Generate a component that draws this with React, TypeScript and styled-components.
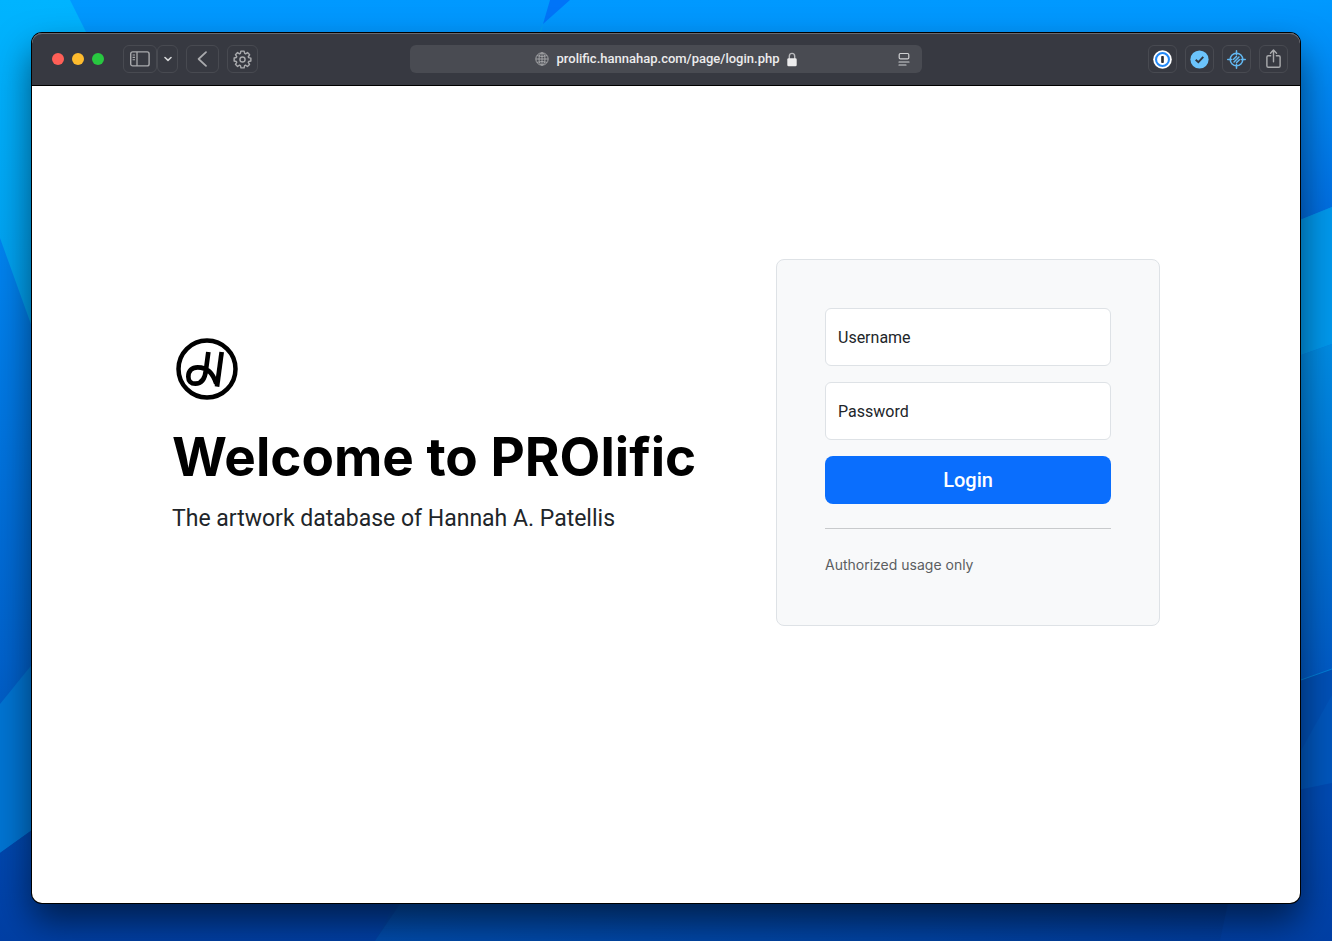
import React from "react";
import styled, { createGlobalStyle } from "styled-components";

const GlobalStyle = createGlobalStyle`
  *, *::before, *::after { box-sizing: border-box; }
  html, body, #root { margin: 0; min-height: 100%; }
  body {
    font-family: Roboto, "Liberation Sans", sans-serif;
    color: #212529;
    background: #0060d0;
  }
  button { font-family: inherit; cursor: pointer; }
`;

const Desktop = styled.div`
  position: relative;
  display: flex;
  min-height: 100vh;
  padding: 33px 32px 38px;
  overflow: hidden;
`;

const Wallpaper = styled.svg`
  position: absolute;
  inset: 0;
  width: 100%;
  height: 100%;
`;

const BrowserWindow = styled.div`
  position: relative;
  flex: 1;
  min-width: 0;
  display: flex;
  flex-direction: column;
  border-radius: 10px;
  background: #fff;
  box-shadow: 0 0 0 1px #000, 0 18px 36px rgba(0, 0, 0, 0.55);
`;

const Toolbar = styled.header`
  display: grid;
  grid-template-columns: 1fr minmax(0, 512px) 1fr;
  align-items: center;
  gap: 12px;
  height: 53px;
  padding: 0 12px;
  border-bottom: 1px solid #000;
  border-radius: 10px 10px 0 0;
  background: #373941;
  box-shadow: inset 0 1px 0 #686a70;
`;

const ToolGroup = styled.div<{ $end?: boolean }>`
  display: flex;
  align-items: center;
  gap: 8px;
  justify-content: ${(p) => (p.$end ? "flex-end" : "flex-start")};
`;

const TrafficLights = styled.div`
  display: flex;
  gap: 8px;
  margin: 0 11px 0 8px;
`;

const Light = styled.button<{ $color: string }>`
  width: 12px;
  height: 12px;
  padding: 0;
  border: 0;
  border-radius: 50%;
  background: ${(p) => p.$color};
`;

const ButtonPair = styled.div`
  display: flex;
`;

const ToolButton = styled.button<{ $width?: number }>`
  display: flex;
  align-items: center;
  justify-content: center;
  width: ${(p) => p.$width ?? 29}px;
  height: 28px;
  padding: 0;
  border: 1px solid #484a51;
  border-radius: 6px;
  background: transparent;
  color: #a9aaad;
`;

const AddressBar = styled.div`
  display: grid;
  grid-template-columns: 1fr auto 1fr;
  align-items: center;
  height: 28px;
  padding: 0 12px;
  border-radius: 6px;
  background: #494b52;
  color: #ececed;
`;

const Address = styled.div`
  grid-column: 2;
  display: flex;
  align-items: center;
  gap: 8px;
  font-size: 13px;
  line-height: 16px;
  font-weight: 500;
  white-space: nowrap;
`;

const ReaderButton = styled.button`
  justify-self: end;
  display: flex;
  padding: 0;
  border: 0;
  background: transparent;
  color: #d0d1d3;
`;

const Page = styled.main`
  flex: 1;
  display: flex;
  justify-content: center;
  align-items: flex-start;
  padding: 173px 24px 48px;
`;

const Container = styled.div`
  display: flex;
  flex-wrap: wrap;
  align-items: center;
  justify-content: space-between;
  gap: 32px;
  width: 100%;
  max-width: 988px;
`;

const Intro = styled.section`
  padding-bottom: 12px;
`;

const Logo = styled.svg`
  display: block;
  margin: 0 3px 28px;
`;

const Title = styled.h1`
  margin: 0 0 16px;
  font-family: Inter, "Liberation Sans", sans-serif;
  font-size: 53px;
  line-height: 56px;
  font-weight: 700;
  color: #000;
`;

const Subtitle = styled.p`
  margin: 0;
  font-size: 23px;
  line-height: 36px;
`;

const Card = styled.form`
  width: 384px;
  padding: 48px;
  border: 1px solid #dee2e6;
  border-radius: 8px;
  background: #f8f9fa;
`;

const Field = styled.div`
  position: relative;
  margin-bottom: 16px;
`;

const Input = styled.input`
  display: block;
  width: 100%;
  height: 58px;
  padding: 24px 12px 8px;
  border: 1px solid #dee2e6;
  border-radius: 6px;
  background: #fff;
  font: inherit;
  color: inherit;
`;

const Label = styled.label`
  position: absolute;
  inset: 0;
  padding: 18px 13px 16px;
  font-size: 16px;
  line-height: 24px;
  pointer-events: none;

  ${Input}:focus + &, ${Input}:not(:placeholder-shown) + & {
    padding-top: 4px;
    font-size: 14px;
  }
`;

const LoginButton = styled.button`
  display: block;
  width: 100%;
  height: 48px;
  border: 0;
  border-radius: 8px;
  background: #0a6efd;
  color: #fff;
  font-size: 20px;
  line-height: 28px;
  font-weight: 500;
`;

const Divider = styled.hr`
  margin: 24px 0;
  border: 0;
  border-top: 1px solid #c8cacc;
`;

const Note = styled.small`
  display: block;
  font-family: Inter, "Liberation Sans", sans-serif;
  font-size: 14px;
  line-height: 24px;
  color: #5b5e61;
`;

const WallpaperArt = () => (
  <Wallpaper viewBox="0 0 1332 941" preserveAspectRatio="none" aria-hidden="true">
    <defs>
      <linearGradient id="base" x1="0" y1="0" x2="0" y2="1">
        <stop offset="0" stopColor="#0099ff" />
        <stop offset="0.25" stopColor="#0084f0" />
        <stop offset="0.7" stopColor="#0062cc" />
        <stop offset="1" stopColor="#0040a0" />
      </linearGradient>
      <linearGradient id="cyan" x1="0" y1="0" x2="0" y2="1">
        <stop offset="0" stopColor="#00b4ff" />
        <stop offset="1" stopColor="#0098e8" />
      </linearGradient>
      <linearGradient id="right" gradientUnits="userSpaceOnUse" x1="0" y1="0" x2="0" y2="240">
        <stop offset="0" stopColor="#0099ff" />
        <stop offset="1" stopColor="#0068dc" />
      </linearGradient>
      <linearGradient id="facet" x1="0" y1="0" x2="0" y2="1">
        <stop offset="0" stopColor="#008ce4" />
        <stop offset="1" stopColor="#0056c2" />
      </linearGradient>
      <linearGradient id="floor" gradientUnits="userSpaceOnUse" x1="0" y1="800" x2="0" y2="941">
        <stop offset="0" stopColor="#004ab2" />
        <stop offset="1" stopColor="#003fa4" />
      </linearGradient>
      <linearGradient id="floorLight" gradientUnits="userSpaceOnUse" x1="375" y1="0" x2="1250" y2="0">
        <stop offset="0" stopColor="#004cac" />
        <stop offset="1" stopColor="#003c9c" />
      </linearGradient>
    </defs>
    <rect width="1332" height="941" fill="url(#base)" />
    <path d="M0 0H70L90 40V400L32 327L0 238Z" fill="url(#cyan)" />
    <path d="M550 0H570L543 24Z" fill="#0074f8" />
    <path d="M543 24L540 40H535Z" fill="#00a0f4" />
    <path d="M1250 0H1332V207L1250 240Z" fill="url(#right)" />
    <path d="M1250 240L1332 207V344L1250 373Z" fill="#0098ec" />
    <path d="M1250 373L1332 344V669L1250 698Z" fill="url(#facet)" />
    <path d="M1250 698L1332 669V783L1250 800Z" fill="#0056bc" />
    <path d="M1332 669V695L1290 770L1250 800V698Z" fill="#0050b6" />
    <path d="M1250 698L1332 669" stroke="#0080d8" />
    <path d="M0 704L60 630V810L0 853Z" fill="#0074d2" />
    <path d="M0 853L60 810L450 800L375 941H0Z" fill="url(#floor)" />
    <path d="M450 830H1250V941H375Z" fill="url(#floorLight)" />
    <path d="M1250 800L1332 783V941H1220Z" fill="url(#floor)" />
  </Wallpaper>
);

const SidebarIcon = () => (
  <svg width="20" height="16" viewBox="0 0 20 16" fill="none" stroke="currentColor" aria-hidden="true">
    <rect x="0.7" y="0.9" width="18.4" height="14" rx="2" strokeWidth="1.4" />
    <path d="M7 1V15" strokeWidth="1.3" />
    <path d="M2.6 4H5M2.6 6.4H5M2.6 8.8H5" strokeWidth="1.1" />
  </svg>
);

const ChevronDownIcon = () => (
  <svg width="8" height="6" viewBox="0 0 8 6" fill="none" stroke="#d5d6d8" strokeWidth="1.6" strokeLinecap="round" strokeLinejoin="round" aria-hidden="true">
    <path d="M1 1.5L4 4.3L7 1.5" />
  </svg>
);

const BackIcon = () => (
  <svg width="12" height="18" viewBox="0 0 12 18" fill="none" stroke="currentColor" strokeWidth="1.8" strokeLinecap="round" strokeLinejoin="round" aria-hidden="true">
    <path d="M9 2.2L1.6 9L9 15.8" />
  </svg>
);

const GearIcon = () => (
  <svg width="19" height="19" viewBox="0 0 20 20" fill="none" stroke="currentColor" strokeWidth="1.5" strokeLinejoin="round" aria-hidden="true">
    <path d="M8.3 1.2H11.7L12.3 3.6L13.2 4L15.3 2.7L17.5 5L16.1 7.1L16.5 8L18.8 8.5V11.6L16.5 12.1L16.1 13L17.4 15.2L15.2 17.4L13.1 16L12.2 16.4L11.7 18.8H8.4L7.8 16.4L6.9 16L4.8 17.3L2.6 15.1L3.9 13L3.5 12.1L1.2 11.6V8.4L3.5 7.9L3.9 7L2.6 4.9L4.8 2.7L6.9 4L7.8 3.6Z" />
    <circle cx="10" cy="10" r="2.7" />
  </svg>
);

const GlobeIcon = () => (
  <svg width="14" height="14" viewBox="0 0 14 14" fill="none" stroke="#a9aaad" strokeWidth="0.9" aria-hidden="true">
    <circle cx="7" cy="7" r="6.2" />
    <ellipse cx="7" cy="7" rx="3" ry="6.2" />
    <path d="M7 1V13M1 7H13M2 3.7Q7 5.3 12 3.7M2 10.3Q7 8.7 12 10.3" />
  </svg>
);

const LockIcon = () => (
  <svg width="10" height="15" viewBox="0 0 10 15" aria-hidden="true">
    <path d="M2.3 7V4.2C2.3 0.4 7.7 0.4 7.7 4.2V7" fill="none" stroke="#b9babd" strokeWidth="1.4" />
    <rect x="0.3" y="6.2" width="9.4" height="8" rx="1.3" fill="#ececed" />
  </svg>
);

const ReaderIcon = () => (
  <svg width="12" height="14" viewBox="0 0 12 14" fill="none" stroke="currentColor" strokeWidth="1.2" strokeLinecap="round" aria-hidden="true">
    <rect x="1.2" y="1.5" width="9.6" height="5.4" rx="1.2" />
    <path d="M1 10H11M1 13H8" />
  </svg>
);

const PasswordManagerIcon = () => (
  <svg width="19" height="19" viewBox="0 0 20 20" aria-hidden="true">
    <circle cx="10" cy="10" r="9.8" fill="#fff" />
    <circle cx="10" cy="10" r="6.8" fill="#fff" stroke="#2389f7" strokeWidth="2.2" />
    <rect x="8.6" y="6.3" width="2.8" height="7.4" rx="0.8" fill="#2b2d33" />
  </svg>
);

const CheckBadgeIcon = () => (
  <svg width="19" height="19" viewBox="0 0 20 20" aria-hidden="true">
    <circle cx="10" cy="10" r="9.6" fill="#6bc4fc" />
    <path d="M6 10.2L8.8 12.8L14 7.3" fill="none" stroke="#30363f" strokeWidth="2" />
  </svg>
);

const TargetIcon = () => (
  <svg width="19" height="19" viewBox="0 0 20 20" fill="none" stroke="#62b9f3" strokeWidth="1.6" strokeLinecap="round" aria-hidden="true">
    <circle cx="10" cy="10" r="6.6" />
    <path d="M10 0.8V5M10 15V19.2M0.8 10H5M15 10H19.2M6.9 9.8L9.9 6.8M7.4 12.6L12.6 7.4M10.1 13.2L13.1 10.2" />
  </svg>
);

const ShareIcon = () => (
  <svg width="17" height="22" viewBox="0 0 18 22" fill="none" stroke="currentColor" strokeWidth="1.5" strokeLinecap="round" strokeLinejoin="round" aria-hidden="true">
    <path d="M6 7.5H3.5Q2 7.5 2 9V18.3Q2 19.8 3.5 19.8H14.5Q16 19.8 16 18.3V9Q16 7.5 14.5 7.5H12" />
    <path d="M9 14V1.8M5.8 4.8L9 1.6L12.2 4.8" />
  </svg>
);

const BrandLogo = () => (
  <Logo width="64" height="64" viewBox="45 36 192 192" fill="none" stroke="#000" role="img" aria-label="Hannah A. Patellis">
    <circle cx="141" cy="132" r="85.5" strokeWidth="13.5" />
    <g strokeWidth="14">
      <path d="M145 81L138 134C135 162 123 176 106 176C93 176 85 168 85 155C85 137 96 127 113 127C143 127 158 144 169 176" />
      <path d="M185 81L171 185" />
    </g>
  </Logo>
);

export default function App() {
  return (
    <>
      <GlobalStyle />
      <Desktop>
        <WallpaperArt />
        <BrowserWindow>
          <Toolbar>
            <ToolGroup>
              <TrafficLights>
                <Light $color="#ff5f57" aria-label="Close" />
                <Light $color="#febc2e" aria-label="Minimize" />
                <Light $color="#28c840" aria-label="Zoom" />
              </TrafficLights>
              <ButtonPair>
                <ToolButton $width={34} aria-label="Show sidebar"><SidebarIcon /></ToolButton>
                <ToolButton $width={21} aria-label="Tab groups"><ChevronDownIcon /></ToolButton>
              </ButtonPair>
              <ToolButton $width={33} aria-label="Back"><BackIcon /></ToolButton>
              <ToolButton $width={31} aria-label="Settings"><GearIcon /></ToolButton>
            </ToolGroup>
            <AddressBar>
              <Address>
                <GlobeIcon />
                <span>prolific.hannahap.com/page/login.php</span>
                <LockIcon />
              </Address>
              <ReaderButton aria-label="Reader"><ReaderIcon /></ReaderButton>
            </AddressBar>
            <ToolGroup $end>
              <ToolButton aria-label="Password manager"><PasswordManagerIcon /></ToolButton>
              <ToolButton aria-label="Verified"><CheckBadgeIcon /></ToolButton>
              <ToolButton aria-label="Content blocker"><TargetIcon /></ToolButton>
              <ToolButton aria-label="Share"><ShareIcon /></ToolButton>
            </ToolGroup>
          </Toolbar>
          <Page>
            <Container>
              <Intro>
                <BrandLogo />
                <Title>Welcome to PROlific</Title>
                <Subtitle>The artwork database of Hannah A. Patellis</Subtitle>
              </Intro>
              <Card onSubmit={(e: React.FormEvent) => e.preventDefault()}>
                <Field>
                  <Input id="username" type="text" placeholder=" " autoComplete="username" />
                  <Label htmlFor="username">Username</Label>
                </Field>
                <Field>
                  <Input id="password" type="password" placeholder=" " autoComplete="current-password" />
                  <Label htmlFor="password">Password</Label>
                </Field>
                <LoginButton type="submit">Login</LoginButton>
                <Divider />
                <Note>Authorized usage only</Note>
              </Card>
            </Container>
          </Page>
        </BrowserWindow>
      </Desktop>
    </>
  );
}
